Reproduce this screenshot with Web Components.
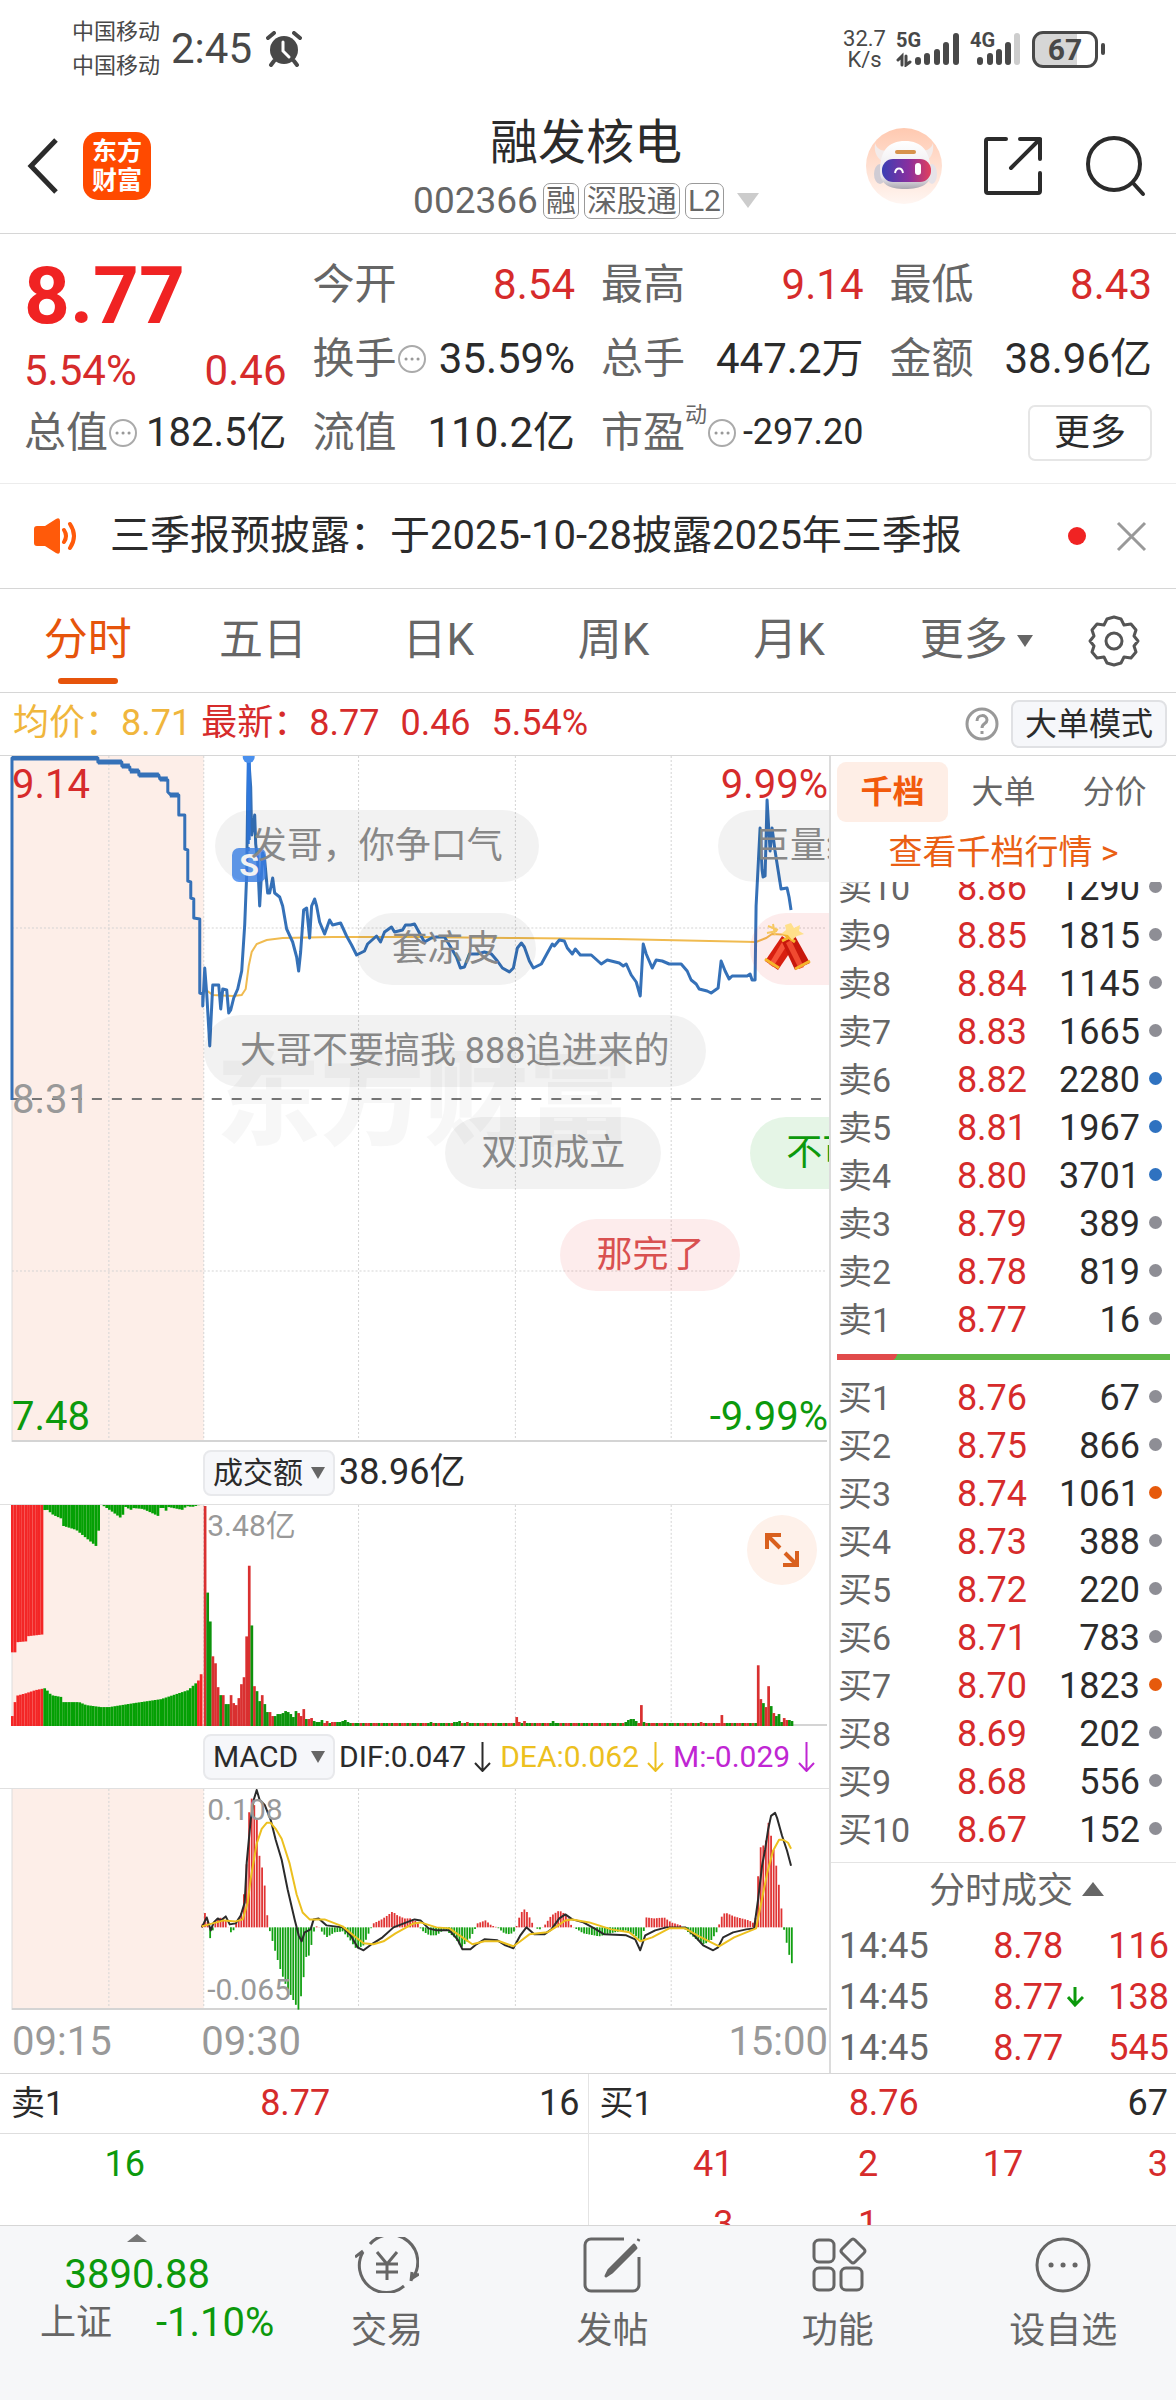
<!DOCTYPE html>
<html lang="zh-CN">
<head>
<meta charset="utf-8">
<meta name="viewport" content="width=device-width, initial-scale=1">
<title>融发核电 002366</title>
<style>
    :root {
        --up: #d62b2b;
        --down: #0c990c;
        --brand: #e6540b;
        --text: #2b2b2b;
        --muted: #666;
        --faint: #999;
        --line: #d6d6d6;
        --panel: #f6f7fa;
    }
    body {
        margin: 0;
        background: #fff;
        color: var(--text);
        font-family: Roboto, "Noto Sans CJK SC", sans-serif;
        font-size: 36px;
        line-height: 1.2;
    }
</style>
</head>
<body>
<stock-page></stock-page>

<script>
const BASE_CSS = `
    * { box-sizing: border-box; }
    :host { display: block; }
    button { font: inherit; color: inherit; background: none; border: 0; padding: 0; margin: 0; }
    a { color: inherit; text-decoration: none; }
    svg { display: block; flex: none; }
    table { border-collapse: collapse; width: 100%; table-layout: fixed; }
    td, th { padding: 0; font-weight: 400; text-align: left; }
    .up { color: var(--up); }
    .down { color: var(--down); }
`;

class BaseElement extends HTMLElement {
    constructor() {
        super();
        this.attachShadow({ mode: 'open' });
    }

    connectedCallback() {
        const template = document.createElement('template');
        template.innerHTML = `<style>${BASE_CSS}${this.css()}</style>${this.html()}`;
        this.shadowRoot.innerHTML = '';
        this.shadowRoot.appendChild(template.content);
    }

    css() { return ''; }
    html() { return '<slot></slot>'; }
}

/* ---------- status bar ---------- */
class StatusBar extends BaseElement {
    css() {
        return `
            :host {
                display: flex;
                align-items: center;
                height: 98px;
                padding: 0 71px 0 72px;
                color: #484848;
            }
            .carrier { font-size: 22px; line-height: 34px; margin-right: 11px; }
            .time { font-size: 42px; margin-right: 14px; }
            .right { display: flex; align-items: center; margin-left: auto; }
            .speed { font-size: 22px; line-height: 21px; text-align: center; margin-right: 10px; }
            .signal { position: relative; width: 64px; height: 36px; margin-right: 10px; }
            .signal.weak { width: 52px; }
            .signal b { position: absolute; left: 0; top: 0; font-size: 20px; line-height: 18px; }
            .battery {
                width: 66px; height: 37px;
                border: 3px solid #484848; border-radius: 11px;
                background: linear-gradient(90deg, #d6d6d6 70%, #fff 70%);
                font-size: 30px; font-weight: 700; line-height: 31px; text-align: center;
            }
            .nub { width: 4px; height: 12px; margin-left: 3px; border-radius: 2px; background: #484848; }
        `;
    }

    html() {
        return `
            <div class="carrier"><div>中国移动</div><div>中国移动</div></div>
            <div class="time">2:45</div>
            <svg width="36" height="36" viewBox="0 0 36 36" fill="none" stroke="#484848" stroke-linecap="round">
                <circle cx="18" cy="19" r="14" fill="#484848" stroke="none"/>
                <path d="M2 7 8 2M34 7 28 2" stroke-width="4"/>
                <path d="M8 30 5 34M28 30 31 34" stroke-width="4"/>
                <path d="M17 11v9l6 6" stroke="#fff" stroke-width="3"/>
            </svg>
            <div class="right">
                <div class="speed"><div>32.7</div><div>K/s</div></div>
                <div class="signal">
                    <b>5G</b>
                    <svg width="64" height="36" viewBox="0 0 64 36" stroke="#484848" stroke-width="6" stroke-linecap="round">
                        <path d="M22 29v2M31 25v6M41 21v10M50 14v17M60 5v26"/>
                        <path d="M2 29l4-4v9M14 31l-4 3v-9" fill="none" stroke-width="3"/>
                    </svg>
                </div>
                <div class="signal weak">
                    <b>4G</b>
                    <svg width="52" height="36" viewBox="0 0 52 36" stroke="#484848" stroke-width="6" stroke-linecap="round">
                        <path d="M10 29v2M20 25v6M29 21v10M38 14v17"/>
                        <path d="M47 5v26" stroke="#cdcdcd"/>
                    </svg>
                </div>
                <div class="battery">67</div><div class="nub"></div>
            </div>
        `;
    }
}

/* ---------- header ---------- */
class StockHeader extends BaseElement {
    css() {
        return `
            :host {
                display: grid;
                grid-template-columns: 1fr auto 1fr;
                align-items: center;
                height: 136px;
                padding: 0 30px 0 26px;
                border-bottom: 1px solid var(--line);
            }
            .left { display: flex; align-items: center; gap: 23px; }
            .logo {
                width: 68px; height: 68px; border-radius: 15px;
                background: #ff4a00; color: #fff;
                font-size: 25px; font-weight: 700; line-height: 29px;
                padding-top: 5px; text-align: center;
            }
            .title { font-size: 48px; line-height: 60px; text-align: center; font-weight: 400; margin: 0 0 10px; }
            .code { display: flex; align-items: center; gap: 5px; color: var(--muted); font-size: 37px; line-height: 36px; }
            .tag { font-size: 30px; line-height: 34px; border: 1px solid #999; border-radius: 7px; padding: 0 2px; }
            .right { display: flex; align-items: center; justify-content: flex-end; gap: 41px; }
            .code svg { margin-left: 8px; }
        `;
    }

    html() {
        return `
            <div class="left">
                <button aria-label="返回">
                    <svg width="34" height="60" viewBox="0 0 34 60" fill="none" stroke="#2b2b2b" stroke-width="5">
                        <path d="M30 4 5 30 30 56"/>
                    </svg>
                </button>
                <div class="logo">东方<br>财富</div>
            </div>
            <div>
                <h1 class="title">融发核电</h1>
                <div class="code">
                    <span>002366</span><span class="tag">融</span><span class="tag">深股通</span><span class="tag">L2</span>
                    <svg width="22" height="15" viewBox="0 0 22 15"><path d="M0 0h22L11 15z" fill="#ccc"/></svg>
                </div>
            </div>
            <div class="right">
                <button aria-label="助手">
                    <svg width="76" height="76" viewBox="0 0 76 76">
                        <defs>
                            <linearGradient id="halo" x2="0" y2="1"><stop stop-color="#ffc9b0"/><stop offset="1" stop-color="#fff6f2"/></linearGradient>
                            <linearGradient id="visor" x2="1"><stop stop-color="#3a3fb4"/><stop offset=".55" stop-color="#8a2f9e"/><stop offset="1" stop-color="#e2405c"/></linearGradient>
                            <linearGradient id="helmet" x2="0" y2="1"><stop stop-color="#fff"/><stop offset=".75" stop-color="#eae8ec"/><stop offset="1" stop-color="#a9a6b0"/></linearGradient>
                        </defs>
                        <circle cx="38" cy="38" r="38" fill="url(#halo)"/>
                        <path d="M9 15c-1 8 1 14 7 18l9-11c-8 2-14 0-16-7zM67 15c1 8-1 14-7 18l-9-11c8 2 14 0 16-7z" fill="#f3ebea"/>
                        <ellipse cx="14" cy="46" rx="6" ry="10" fill="#d0ccd4"/>
                        <ellipse cx="66" cy="46" rx="5" ry="10" fill="#e6e2e8"/>
                        <path d="M14 43c0-20 8-30 25-30s25 10 26 30c1 13-10 18-26 18S14 56 14 43z" fill="url(#helmet)"/>
                        <rect x="29" y="22" width="21" height="4" rx="2" fill="#d7934c"/>
                        <rect x="16" y="31" width="49" height="23" rx="11" fill="url(#visor)"/>
                        <path d="M29 45c1-6 7-6 8 0" fill="none" stroke="#fff" stroke-width="2"/>
                        <rect x="49" y="35" width="6" height="12" rx="3" fill="#fff"/>
                    </svg>
                </button>
                <button aria-label="分享">
                    <svg width="60" height="60" viewBox="0 0 60 60" fill="none" stroke="#2b2b2b" stroke-width="4" stroke-linecap="round" stroke-linejoin="round">
                        <path d="M23 3H5a2 2 0 0 0-2 2v50a2 2 0 0 0 2 2h50a2 2 0 0 0 2-2V37"/>
                        <path d="M37 3h20v20M57 3 28 32"/>
                    </svg>
                </button>
                <button aria-label="搜索">
                    <svg width="62" height="62" viewBox="0 0 62 62" fill="none" stroke="#2b2b2b" stroke-width="4" stroke-linecap="round">
                        <circle cx="30" cy="29" r="26"/><path d="M49 48 59 59"/>
                    </svg>
                </button>
            </div>
        `;
    }
}

/* ---------- quote board ---------- */
const INFO_ICON = `
    <svg width="30" height="30" viewBox="0 0 30 30" fill="none" stroke="#aaa" stroke-width="2">
        <circle cx="15" cy="15" r="13"/>
        <path d="M9 15h.1M15 15h.1M21 15h.1" stroke="#999" stroke-width="3" stroke-linecap="round"/>
    </svg>`;

class QuoteItem extends BaseElement {
    css() {
        return `
            :host { display: flex; align-items: center; font-size: 42px; white-space: nowrap; }
            .label { color: var(--muted); }
            sup { font-size: 22px; line-height: 22px; align-self: flex-start; margin-top: 8px; color: var(--muted); }
            .value { margin-left: auto; }
            :host([tone="up"]) .value { color: var(--up); }
            :host([size="small"]) .value { font-size: 40px; }
            :host([size="tiny"]) .value { font-size: 36px; }
        `;
    }

    html() {
        const mark = this.getAttribute('mark');
        return `
            <span class="label">${this.getAttribute('label')}</span>
            ${mark ? `<sup>${mark}</sup>` : ''}
            ${this.hasAttribute('info') ? INFO_ICON : ''}
            <span class="value"><slot></slot></span>
        `;
    }
}

class QuoteBoard extends BaseElement {
    css() {
        return `
            :host {
                display: grid;
                grid-template-columns: repeat(4, 1fr);
                grid-auto-rows: 74px;
                column-gap: 26px;
                padding: 14px 24px 13px;
                border-bottom: 1px solid #ececec;
            }
            .main { grid-row: span 2; display: flex; flex-direction: column; justify-content: flex-end; gap: 8px; color: var(--up); }
            .price { font-size: 80px; font-weight: 700; line-height: 84px; color: #f02323; }
            .change { display: flex; justify-content: space-between; font-size: 42px; line-height: 50px; }
            .more {
                justify-self: end; align-self: center;
                width: 124px; height: 56px;
                border: 2px solid #e6e6e6; border-radius: 7px;
                background: #fff; font-size: 36px; line-height: 50px;
            }
        `;
    }

    html() {
        return `
            <div class="main">
                <div class="price">8.77</div>
                <div class="change"><span>5.54%</span><span>0.46</span></div>
            </div>
            <quote-item label="今开" tone="up">8.54</quote-item>
            <quote-item label="最高" tone="up">9.14</quote-item>
            <quote-item label="最低" tone="up">8.43</quote-item>
            <quote-item label="换手" info>35.59%</quote-item>
            <quote-item label="总手">447.2万</quote-item>
            <quote-item label="金额">38.96亿</quote-item>
            <quote-item label="总值" info size="small">182.5亿</quote-item>
            <quote-item label="流值">110.2亿</quote-item>
            <quote-item label="市盈" mark="动" info size="tiny">-297.20</quote-item>
            <button class="more">更多</button>
        `;
    }
}

/* ---------- notice ---------- */
class NoticeBar extends BaseElement {
    css() {
        return `
            :host {
                display: flex;
                align-items: center;
                height: 105px;
                padding: 0 29px 0 34px;
                border-bottom: 1px solid var(--line);
            }
            a { flex: 1; margin-left: 32px; font-size: 40px; white-space: nowrap; }
            .dot { width: 18px; height: 18px; border-radius: 50%; background: #f02323; margin-right: 30px; }
        `;
    }

    html() {
        return `
            <svg width="44" height="36" viewBox="0 0 44 36">
                <path d="M0 11q0-3 3-3h8L22 1q4-2 4 2v30q0 4-4 2l-11-7H3q-3 0-3-3z" fill="#ff5a0a"/>
                <path d="M30 12q4 6 0 12M36 6q8 12 0 24" fill="none" stroke="#ff5a0a" stroke-width="4" stroke-linecap="round"/>
            </svg>
            <a href="#notice"><slot></slot></a>
            <span class="dot"></span>
            <button aria-label="关闭">
                <svg width="31" height="31" viewBox="0 0 31 31" stroke="#999" stroke-width="3"><path d="M2 2 29 29M29 2 2 29"/></svg>
            </button>
        `;
    }
}

/* ---------- period tabs ---------- */
class PeriodTabs extends BaseElement {
    css() {
        return `
            :host { display: grid; grid-template-columns: repeat(6, 1fr) 124px; height: 104px; border-bottom: 1px solid var(--line); }
            button { font-size: 44px; color: var(--muted); display: flex; align-items: center; justify-content: center; gap: 9px; }
            .on { position: relative; color: var(--brand); }
            .on::after {
                content: ""; position: absolute; left: 50%; bottom: 8px;
                width: 60px; height: 6px; margin-left: -30px; border-radius: 3px; background: var(--brand);
            }
            .more { padding-left: 24px; }
        `;
    }

    html() {
        const tabs = ['分时', '五日', '日K', '周K', '月K'];
        const teeth = 'M27 3l7 2 3 6 7-1 5 6-2 6 4 5-4 5 2 6-5 6-7-1-3 6-7 2-7-2-3-6-7 1-5-6 2-6-4-5 4-5-2-6 5-6 7 1 3-6z';
        return `
            ${tabs.map((t, i) => `<button class="${i ? '' : 'on'}">${t}</button>`).join('')}
            <button class="more">更多<svg width="16" height="12" viewBox="0 0 16 12"><path d="M0 0h16L8 12z" fill="#666"/></svg></button>
            <button aria-label="设置">
                <svg width="54" height="54" viewBox="0 0 54 54" fill="none" stroke="#555" stroke-width="3" stroke-linejoin="round">
                    <path d="${teeth}"/><circle cx="27" cy="27" r="8"/>
                </svg>
            </button>
        `;
    }
}

/* ---------- line above the chart ---------- */
class ChartLegend extends BaseElement {
    css() {
        return `
            :host {
                display: flex;
                align-items: center;
                height: 63px;
                padding: 0 9px 0 13px;
                border-bottom: 1px solid var(--line);
            }
            .avg { color: #f0b63c; margin-right: 10px; }
            .up { display: flex; gap: 21px; }
            .help { margin-left: auto; margin-right: 12px; }
            .mode {
                height: 48px; padding: 0 12px;
                border: 2px solid #e0e1e4; border-radius: 8px;
                background: var(--panel); font-size: 32px; line-height: 42px;
            }
        `;
    }

    html() {
        return `
            <span class="avg">均价：8.71</span>
            <span class="up"><span>最新：8.77</span><span>0.46</span><span>5.54%</span></span>
            <button class="help" aria-label="帮助">
                <svg width="34" height="34" viewBox="0 0 34 34" fill="none" stroke="#999" stroke-width="3">
                    <circle cx="17" cy="17" r="15"/>
                    <path d="M12 14c0-7 10-7 10-1 0 4-5 3-5 8M17 24v3"/>
                </svg>
            </button>
            <button class="mode">大单模式</button>
        `;
    }
}

/* ---------- charts ---------- */
const CHART_W = 830;
const LEFT = 12;
const OPEN_X = 204;
const RIGHT = 828;
const STEP = 2.6;
const GRID_X = [109, 204, 359, 516, 672];

const CHART_CSS = `
    :host { position: relative; overflow: hidden; }
    .plot { width: 100%; }
    .label { position: absolute; line-height: 40px; white-space: nowrap; }
    .grid { stroke: #d4d4d4; stroke-width: 1; stroke-dasharray: 2 2; }
`;

function frame(h) {
    return `
        <rect x="${LEFT}" y="0" width="${OPEN_X - LEFT}" height="${h}" fill="#fdeee8"/>
        ${GRID_X.map(x => `<line class="grid" x1="${x}" x2="${x}" y1="0" y2="${h}"/>`).join('')}
        <path d="M${LEFT} 0V${h}" stroke="#ddd"/>
        <path d="M${LEFT} ${h - 1}H${RIGHT}" stroke="#d4d4d4" stroke-width="2"/>
    `;
}

// chart x as a share of the chart's width
function left(x) {
    return `left:${(x / CHART_W * 100).toFixed(1)}%`;
}

// linear value of a list of [x, value] at x
function sample(points, x) {
    for (let i = 1; i < points.length; i++) {
        const [x0, v0] = points[i - 1];
        const [x1, v1] = points[i];
        if (x <= x1) {
            return x1 === x0 ? v1 : v0 + (v1 - v0) * (x - x0) / (x1 - x0);
        }
    }
    return points[points.length - 1][1];
}

class PriceChart extends BaseElement {
    css() {
        return `
            ${CHART_CSS}
            .plot { height: 686px; }
            .label { font-size: 40px; }
            .tl { left: 12px; top: 9px; }
            .ml { left: 12px; top: 324px; color: var(--faint); }
            .bl { left: 12px; bottom: 5px; }
            .tr { right: 1px; top: 9px; }
            .br { right: 1px; bottom: 5px; }
            .watermark {
                position: absolute; top: 286px;
                font-size: 104px; font-weight: 900; line-height: 120px; white-space: nowrap;
                color: rgba(0, 0, 0, .03);
            }
            .badge {
                position: absolute; top: 92px;
                width: 34px; height: 34px; border-radius: 7px;
                background: rgba(60, 133, 240, .8); color: #fff;
                font-size: 32px; font-weight: 700; line-height: 35px; text-align: center;
            }
            .pill {
                position: absolute; height: 72px; padding: 0 36px; border-radius: 36px;
                background: rgba(0, 0, 0, .05); color: #888;
                line-height: 72px; white-space: nowrap;
            }
            .pill.red { background: rgba(235, 40, 40, .09); color: #d95050; }
            .pill.green { background: rgba(20, 160, 30, .11); color: var(--down); }
            .pill.cracker { padding: 10px 60px 0 14px; }
        `;
    }

    html() {
        const price = `12,344 12,2 98,2 98,6 122,6 122,10 130,11 130,14 139,15 139,19 159,19 160,23 168,24 168,36
            171,39 179,39 179,59 185,59 185,93 188,94 188,125 191,126 191,142 194,143 194,162 200,163 200,237
            203,238 203,250 205,212 207,238 210,290 213,229 219,229 221,253 223,233 227,234 229,257 231,254
            234,242 238,233 242,215 245,169 247,118 248,40 249,2 251,31 252,79 255,59 256,88 258,105 260,150
            263,97 265,104 268,137 270,137 273,122 275,137 280,141 283,150 287,173 293,186 297,201 299,215
            301,196 304,154 307,152 310,182 312,150 315,143 317,150 320,166 325,178 330,164 333,169 341,167
            347,180 352,189 357,199 365,195 368,188 377,180 381,186 385,176 392,171 395,176 403,174 406,169
            411,169 415,168 420,177 425,186 432,182 437,181 445,181 450,189 457,201 461,212 465,211 470,198
            478,198 485,196 492,198 498,205 503,212 510,216 514,212 518,192 522,187 525,191 530,205 534,212
            542,208 548,197 553,188 555,190 560,184 565,185 568,192 573,198 576,193 581,199 592,199 602,208
            608,204 620,207 624,210 627,208 632,219 637,226 641,240 644,188 647,198 653,212 657,204 663,205
            670,208 682,208 688,215 692,224 697,228 700,233 708,235 712,237 719,232 722,205 726,215 730,223
            733,220 748,220 751,218 753,224 756,224 757,150 761,72 763,114 764,121 766,120 768,44 771,95
            773,72 776,95 779,114 782,133 788,132 790,141 792,154`;
        const average = `205,233 213,239 233,240 242,239 246,233 249,210 252,196 257,188 267,184 283,182 333,181
            417,181 517,182 617,183 757,186 767,182 773,178 792,179`;
        const pills = [
            [215, 54, '', '发哥，你争口气'],
            [356, 157, '', '套凉皮'],
            [204, 259, '', '大哥不要搞我 888追进来的'],
            [446, 361, '', '双顶成立'],
            [561, 463, 'red', '那完了'],
            [719, 54, '', '巨量缩'],
            [751, 361, 'green', '不可'],
        ];
        return `
            <div class="watermark" style="${left(217)}" aria-hidden="true">东方财富</div>
            <svg class="plot" viewBox="0 0 ${CHART_W} 686" preserveAspectRatio="none" fill="none">
                ${frame(686)}
                <path class="grid" d="M12 172H828M12 515H828"/>
                <path d="M12 343H828" stroke="#777" stroke-width="2" stroke-dasharray="10 10"/>
                <polyline points="${average}" stroke="#f0bb50" stroke-width="2"/>
                <polyline points="${price}" stroke="#3571b8" stroke-width="3" stroke-linejoin="round"/>
                <path d="M12 2H98M98 6h24M122 10h8M130 15h9M139 19h20M160 23h8M170 39h9" stroke="#3571b8" stroke-width="5"/>
                <path d="M249 0V84" stroke="#2f78dd" stroke-width="4"/>
                <path d="M249 84V96" stroke="#2f78dd" stroke-width="2" stroke-dasharray="4 3"/>
                <circle cx="249" cy="1" r="6" fill="#4a90ee"/>
            </svg>
            <span class="label tl up">9.14</span>
            <span class="label ml">8.31</span>
            <span class="label bl down">7.48</span>
            <span class="label tr up">9.99%</span>
            <span class="label br down">-9.99%</span>
            <span class="badge" style="${left(232)}">S</span>
            ${pills.map(([x, y, tone, text]) => `<span class="pill ${tone}" style="${left(x)};top:${y}px">${text}</span>`).join('')}
            <span class="pill red cracker" style="${left(751)};top:157px">
                <svg width="48" height="50" viewBox="0 0 48 50">
                    <path d="M18 13l13 9-17 25L1 38z" fill="#d81f10"/>
                    <path d="M20 16l5 3-16 25-4-3z" fill="#f6543a"/>
                    <path d="M31 13L18 19l13 28 15-7z" fill="#c8180c"/>
                    <path d="M27 17l-5 3 13 26 5-2z" fill="#f04a30"/>
                    <path d="M1 36l14 9M20 11l11 8M31 46l15-8M18 18l13-7" stroke="#f5b52c" stroke-width="3"/>
                    <path d="M27 0l3 5 6-3-1 6 5 3-7 2-5 4-4-5-7-1 5-4-1-5z" fill="#ffe08a"/>
                    <path d="M4 3l10 4M3 10l10-2M9 1l2 11" stroke="#f7c861" stroke-width="2"/>
                </svg>
            </span>
        `;
    }
}

const PANEL_CSS = `
    .head { display: flex; align-items: center; height: 62px; padding-left: 24.5%; white-space: nowrap; }
    .head button {
        display: flex; align-items: center; justify-content: space-between;
        width: 132px; height: 46px; padding: 0 8px; margin-right: 4px;
        border: 2px solid #e8e9ec; border-radius: 8px; background: var(--panel); font-size: 30px;
    }
    .plot { height: 222px; border-top: 1px solid #e0e0e0; }
    .area { position: relative; }
    .label { left: 25%; font-size: 30px; color: var(--faint); }
`;
const DOWN_TRIANGLE = '<svg width="14" height="12" viewBox="0 0 14 12"><path d="M0 0h14L7 12z" fill="#666"/></svg>';

class VolumeChart extends BaseElement {
    css() {
        return `
            ${CHART_CSS}
            ${PANEL_CSS}
            .expand {
                position: absolute; right: 12px; top: 11px;
                width: 70px; height: 70px; border-radius: 50%;
                display: flex; align-items: center; justify-content: center;
                background: #fef1ea;
            }
        `;
    }

    bar(x, y, h, color) {
        return `<rect x="${x}" y="${y}" width="2.7" height="${h}" fill="${color}"/>`;
    }

    auctionBars() {
        const red = '#f32626';
        const green = '#04a004';
        const top = [[11, 148], [14, 148], [14, 138], [25, 137], [25, 132], [42, 130], [42, 6], [45, 4], [52, 10],
            [61, 14], [62, 21], [75, 25], [97, 43], [98, 0], [101, 0], [110, 6], [121, 14], [123, 2], [126, 2],
            [129, 6], [131, 3], [142, 4], [157, 11], [158, 3], [164, 3], [165, 6], [167, 2], [182, 5], [185, 1],
            [191, 2], [198, 0], [204, 0]];
        const bottom = [[11, 10], [13, 10], [14, 30], [25, 33], [34, 36], [44, 38], [50, 31], [61, 29], [62, 24],
            [78, 24], [85, 21], [100, 19], [108, 19], [133, 23], [160, 27], [187, 36], [197, 45], [200, 52], [204, 58]];
        let out = '';
        for (let x = 11; x < 202; x += 2.7) {
            const hanging = sample(top, x);
            if (hanging > 0) out += this.bar(x, 0, hanging, x < 43 ? red : green);
            const h = sample(bottom, x);
            out += this.bar(x, 222 - h, h, x < 43 || x > 197 ? red : green);
        }
        return out;
    }

    tradeBars() {
        const opening = 'r221 g134 g105 r70 r63 r39 g31 r31 g22 g22 r31 r23 r21 r28 r42 r49 r90 r161 g101 r40 g35 g25 r31 g22 g14 r14 r10 g10 g12 g12 g13 g15 g14 g12 g9 g15 r13 r10 r17 g7 r7 r8 g5 g4 g4 g6 r3 r5 g3 r4 r4 g4 g4 g5 g6 g4'.split(' ');
        const closing = 'r61 r27 g23 r19 r40 g20 r13 g10 g12 g4 r8 r6 g6 g5'.split(' ');
        const spikes = {
            87: 'g4', 96: 'g4', 97: 'g4', 98: 'g5', 101: 'r4', 120: 'r9', 121: 'r4', 123: 'r5', 134: 'g5',
            162: 'g4', 163: 'g6', 164: 'g7', 165: 'g7', 166: 'g5', 168: 'r21', 169: 'g4', 191: 'r4', 199: 'r11',
        };
        let out = '';
        for (let i = 0; i < 227; i++) {
            const idle = (i * 7) % 11 < 6 ? 'r3' : 'g3';
            const item = opening[i] || closing[i - 213] || spikes[i] || idle;
            const h = Number(item.slice(1));
            out += this.bar(OPEN_X + i * STEP, 222 - h, h, item[0] === 'r' ? '#d93030' : '#0c930c');
        }
        return out;
    }

    html() {
        return `
            <div class="head"><button>成交额${DOWN_TRIANGLE}</button>38.96亿</div>
            <div class="area">
                <svg class="plot" viewBox="0 0 ${CHART_W} 222" preserveAspectRatio="none">
                    ${frame(222)}${this.auctionBars()}${this.tradeBars()}
                </svg>
                <span class="label" style="top:2px">3.48亿</span>
                <button class="expand" aria-label="放大">
                    <svg width="34" height="34" viewBox="0 0 34 34" fill="none" stroke="#d9601e" stroke-width="4">
                        <path d="M2 16V2h14M2 2l13 13M32 18v14H18M32 32 20 20"/>
                    </svg>
                </button>
            </div>
        `;
    }
}

class MacdChart extends BaseElement {
    css() {
        return `
            ${CHART_CSS}
            ${PANEL_CSS}
            .value { display: flex; align-items: center; gap: 8px; font-size: 30px; margin-right: 9px; }
            .dea { color: #ecc01f; }
            .m { color: #c026d3; }
        `;
    }

    histogram() {
        const points = [[202, 0], [205, 15], [208, 5], [210, -12], [213, -3], [216, 8], [222, 10], [227, 6], [230, -5],
            [233, -5], [236, 3], [242, 15], [245, 40], [247, 66], [250, 128], [253, 130], [257, 112], [260, 69],
            [263, 58], [265, 42], [267, 16], [270, -3], [275, -22], [280, -40], [285, -55], [292, -70], [299, -83],
            [303, -60], [306, -30], [310, -28], [314, -5], [318, 3], [322, -4], [327, -10], [335, -5], [343, -4],
            [350, -12], [357, -22], [364, -18], [370, -4], [374, 4], [382, 8], [388, 12], [393, 16], [398, 12],
            [405, 9], [412, 9], [418, 5], [422, -3], [430, -8], [437, -8], [445, -2], [455, -10], [462, -20],
            [470, -12], [475, -3], [478, 4], [486, 7], [492, 2], [498, 0], [505, -6], [511, -7], [516, -3], [519, 8],
            [524, 19], [528, 15], [532, 6], [536, -1], [541, -2], [546, 3], [552, 12], [560, 17], [568, 12], [572, 2],
            [576, -1], [584, -6], [600, -9], [615, -5], [627, -3], [636, -8], [642, -14], [645, -2], [647, 10],
            [655, 9], [665, 10], [672, 5], [682, 2], [688, -4], [697, -12], [705, -17], [712, -13], [718, -4],
            [722, 10], [726, 15], [735, 11], [750, 7], [755, 4], [757, 12], [758, 40], [762, 85], [766, 80],
            [769, 107], [772, 92], [776, 70], [779, 50], [782, 23], [784, 3], [786, -8], [789, -22], [792, -36]];
        let out = '';
        for (let x = 202.6; x <= 793; x += STEP) {
            const v = sample(points, x);
            out += `<path d="M${x} 139V${139 - v}" stroke="${v > 0 ? '#e03434' : '#12a012'}" stroke-width="1.8"/>`;
        }
        return out;
    }

    html() {
        const dif = `202,139 207,129 211,142 214,134 218,130 221,132 226,128 230,136 236,135 241,127 245,114 247,74
            251,31 254,11 257,1 260,11 265,16 271,31 276,51 282,71 288,101 295,131 299,147 302,153 305,144 311,141
            314,131 319,130 327,137 343,139 351,147 358,159 364,162 372,156 383,149 394,139 407,134 415,131 421,132
            429,140 437,142 450,142 458,151 463,161 471,161 477,156 485,151 498,152 506,157 514,160 521,147 527,139
            535,146 545,146 552,141 560,130 566,126 573,131 584,134 595,140 605,146 627,147 636,151 641,162 646,147
            656,142 667,139 686,139 694,146 704,157 714,162 719,159 724,149 734,144 747,141 755,140 759,111 763,77
            766,61 769,41 772,27 776,24 778,29 783,47 788,62 792,77`;
        const dea = `202,138 224,132 236,133 243,131 248,114 251,90 257,55 262,40 267,34 271,34 276,40 282,50 290,75
            297,106 303,124 310,131 325,131 343,138 355,148 364,155 374,156 384,153 396,145 414,135 421,134 437,139
            450,140 460,147 473,156 485,153 500,153 514,158 521,153 530,146 548,144 556,139 566,132 573,131 590,134
            612,141 630,144 641,153 653,149 670,140 686,140 700,148 720,158 735,149 757,140 762,115 768,85 774,62
            780,51 784,51 789,54 792,60`;
        const arrow = '<svg width="17" height="30" viewBox="0 0 17 30" fill="none" stroke="currentColor" stroke-width="2"><path d="M8.5 0v29M1 21l7.5 8 7.5-8"/></svg>';
        return `
            <div class="head">
                <button>MACD${DOWN_TRIANGLE}</button>
                <span class="value">DIF:0.047${arrow}</span>
                <span class="value dea">DEA:0.062${arrow}</span>
                <span class="value m">M:-0.029${arrow}</span>
            </div>
            <div class="area">
                <svg class="plot" viewBox="0 0 ${CHART_W} 222" preserveAspectRatio="none" fill="none">
                    ${frame(222)}${this.histogram()}
                    <polyline points="${dif}" stroke="#2b2b2b" stroke-width="2" stroke-linejoin="round"/>
                    <polyline points="${dea}" stroke="#ecc01f" stroke-width="2" stroke-linejoin="round"/>
                </svg>
                <span class="label" style="top:2px">0.108</span>
                <span class="label" style="bottom:0">-0.065</span>
            </div>
        `;
    }
}

class TimeAxis extends BaseElement {
    css() {
        return `
            :host { display: flex; height: 63px; padding: 0 1px 0 12px; color: var(--faint); font-size: 40px; line-height: 63px; }
            .call { width: 23.2%; }
            .close { margin-left: auto; }
        `;
    }

    html() {
        return '<span class="call">09:15</span><span>09:30</span><span class="close">15:00</span>';
    }
}

/* ---------- order book ---------- */
class OrderBook extends BaseElement {
    css() {
        return `
            :host { padding: 6px 6px 8px; }
            .tabs { display: grid; grid-template-columns: repeat(3, 1fr); }
            .tabs button { height: 60px; border-radius: 9px; font-size: 32px; color: var(--muted); }
            .tabs .on { background: #feeee6; color: #f25a0c; font-weight: 700; }
            .link { display: block; text-align: center; font-size: 34px; line-height: 60px; color: #ea5f14; }
            .clip { overflow: hidden; }
            .clip table { margin-top: -18px; }
            tr { height: 48px; line-height: 46px; }
            th { width: 36%; font-size: 34px; color: var(--muted); padding-left: 1px; }
            .vol { width: 34%; text-align: right; }
            .mark { width: 9%; }
            .mark i { display: block; width: 13px; height: 13px; margin: 0 auto 4px; border-radius: 50%; background: #8e8e95; }
            .mark .blue { background: #2f72c0; }
            .mark .orange { background: #e65a0c; }
            .ratio {
                height: 6px; margin: 10px 0 14px;
                background: linear-gradient(120deg, #e14b4b 18%, #5fb848 18%);
            }
        `;
    }

    rows(name, list) {
        return list.map(([n, price, vol, mark = '']) => `
            <tr>
                <th scope="row">${name}${n}</th>
                <td class="up">${price}</td>
                <td class="vol">${vol}</td>
                <td class="mark"><i class="${mark}"></i></td>
            </tr>`).join('');
    }

    html() {
        const sell = [
            [10, '8.86', 1290], [9, '8.85', 1815], [8, '8.84', 1145], [7, '8.83', 1665], [6, '8.82', 2280, 'blue'],
            [5, '8.81', 1967, 'blue'], [4, '8.80', 3701, 'blue'], [3, '8.79', 389], [2, '8.78', 819], [1, '8.77', 16],
        ];
        const buy = [
            [1, '8.76', 67], [2, '8.75', 866], [3, '8.74', 1061, 'orange'], [4, '8.73', 388], [5, '8.72', 220],
            [6, '8.71', 783], [7, '8.70', 1823, 'orange'], [8, '8.69', 202], [9, '8.68', 556], [10, '8.67', 152],
        ];
        return `
            <div class="tabs"><button class="on">千档</button><button>大单</button><button>分价</button></div>
            <a class="link" href="#levels">查看千档行情 &gt;</a>
            <div class="clip"><table>${this.rows('卖', sell)}</table></div>
            <div class="ratio"></div>
            <table>${this.rows('买', buy)}</table>
        `;
    }
}

class TradeList extends BaseElement {
    css() {
        return `
            :host { border-top: 1px solid #e4e4e4; }
            .head { display: flex; align-items: center; justify-content: center; gap: 9px; width: 100%; height: 57px; padding-left: 26px; color: var(--muted); }
            .head svg { margin-top: -6px; }
            tr { height: 51px; line-height: 46px; }
            .time { width: 47%; padding-left: 8px; color: var(--muted); }
            .price { width: 27%; }
            .price span { display: flex; align-items: center; gap: 4px; }
            .vol { text-align: right; padding-right: 7px; }
        `;
    }

    html() {
        const arrow = '<svg width="17" height="20" viewBox="0 0 17 20" fill="none" stroke="#0c990c" stroke-width="3"><path d="M8 0v17M1 10l7 8 8-8"/></svg>';
        const trades = [['14:45', '8.78', 116], ['14:45', `8.77${arrow}`, 138], ['14:45', '8.77', 545]];
        return `
            <button class="head">分时成交<svg width="22" height="14" viewBox="0 0 22 14"><path d="M11 0l11 14H0z" fill="#666"/></svg></button>
            <table>
                ${trades.map(([t, p, v]) => `<tr><td class="time">${t}</td><td class="price up"><span>${p}</span></td><td class="vol up">${v}</td></tr>`).join('')}
            </table>
        `;
    }
}

/* ---------- level one queue ---------- */
class QuoteQueue extends BaseElement {
    css() {
        return `
            :host { flex: 1; min-width: 0; }
            .head { display: grid; grid-template-columns: repeat(3, 1fr); height: 60px; line-height: 59px; padding: 0 8px 0 11px; border-bottom: 1px solid #dedede; }
            .name { font-size: 34px; }
            .price { text-align: center; color: var(--up); }
            .total { text-align: right; }
            .list { display: grid; grid-template-columns: repeat(4, 1fr); grid-auto-rows: 60px; height: 91px; overflow: hidden; padding-right: 8px; line-height: 60px; text-align: right; }
        `;
    }

    html() {
        const tone = this.getAttribute('tone');
        const list = this.getAttribute('list').split(' ');
        return `
            <div class="head">
                <span class="name">${this.getAttribute('name')}</span>
                <span class="price">${this.getAttribute('price')}</span>
                <span class="total">${this.getAttribute('total')}</span>
            </div>
            <div class="list ${tone}">${list.map(n => `<span>${n}</span>`).join('')}</div>
        `;
    }
}

/* ---------- bottom navigation ---------- */
class BottomNav extends BaseElement {
    css() {
        return `
            :host {
                display: grid;
                grid-template-columns: 17fr repeat(4, 14fr);
                align-items: start;
                flex: 1;
                border-top: 1px solid var(--line);
                background: #f6f7f9;
            }
            .index { text-align: center; padding-top: 8px; font-size: 40px; line-height: 48px; white-space: nowrap; }
            .index svg { margin: 0 auto; }
            .value { padding-top: 9px; }
            .row { display: flex; gap: 44px; padding-left: 40px; }
            .name { font-size: 36px; color: var(--muted); }
            .item { display: flex; flex-direction: column; align-items: center; gap: 14px; padding-top: 11px; line-height: 48px; color: var(--muted); }
        `;
    }

    icon(body) {
        return `<svg width="64" height="56" viewBox="0 0 64 56" fill="none" stroke="#666" stroke-width="3" stroke-linejoin="round">${body}</svg>`;
    }

    html() {
        const items = [
            ['交易', '<path d="M15 7a27 27 0 0 1 41 36M49 49A27 27 0 0 1 8 15M0 20l8-6M56 42l8-5M56 44l1-9"/><path d="M22 15l10 12 10-12M32 27v16M21 27h22M21 35h22"/>'],
            ['发帖', '<path d="M44 2H11a6 6 0 0 0-6 6v40a6 6 0 0 0 6 6h42a6 6 0 0 0 6-6V20"/><path d="M54 8 29 33l-3 6 6-4L56 11zM58 4l1-2" fill="#666"/>'],
            ['功能', '<rect x="8" y="3" width="20" height="22" rx="5"/><rect x="8" y="31" width="20" height="22" rx="5"/><rect x="35" y="31" width="21" height="22" rx="5"/><path d="M45 3q2-2 4 0l9 9q2 2 0 4l-9 9q-2 2-4 0l-9-9q-2-2 0-4z"/>'],
            ['设自选', '<circle cx="32" cy="28" r="26"/><path d="M20 28h.1M32 28h.1M44 28h.1" stroke-width="5" stroke-linecap="round"/>'],
        ];
        return `
            <div class="index">
                <svg width="20" height="8" viewBox="0 0 20 8"><path d="M10 0l10 8H0z" fill="#777"/></svg>
                <div class="value down">3890.88</div>
                <div class="row"><span class="name">上证</span><span class="down">-1.10%</span></div>
            </div>
            ${items.map(([name, body]) => `<button class="item">${this.icon(body)}<span>${name}</span></button>`).join('')}
        `;
    }
}

/* ---------- page ---------- */
class StockPage extends BaseElement {
    css() {
        return `
            :host { display: flex; flex-direction: column; min-height: 100vh; }
            main { display: grid; grid-template-columns: 831fr 345fr; border-bottom: 1px solid var(--line); }
            .charts { min-width: 0; border-right: 2px solid #dcdcdc; }
            aside { min-width: 0; }
            .queues { display: flex; }
            .queues quote-queue + quote-queue { border-left: 1px solid #e4e4e4; }
        `;
    }

    html() {
        return `
            <status-bar></status-bar>
            <stock-header></stock-header>
            <quote-board></quote-board>
            <notice-bar>三季报预披露：于2025-10-28披露2025年三季报</notice-bar>
            <period-tabs></period-tabs>
            <chart-legend></chart-legend>
            <main>
                <section class="charts">
                    <price-chart></price-chart>
                    <volume-chart></volume-chart>
                    <macd-chart></macd-chart>
                    <time-axis></time-axis>
                </section>
                <aside>
                    <order-book></order-book>
                    <trade-list></trade-list>
                </aside>
            </main>
            <div class="queues">
                <quote-queue name="卖1" price="8.77" total="16" tone="down" list="16"></quote-queue>
                <quote-queue name="买1" price="8.76" total="67" tone="up" list="41 2 17 3 3 1"></quote-queue>
            </div>
            <bottom-nav></bottom-nav>
        `;
    }
}

customElements.define('status-bar', StatusBar);
customElements.define('stock-header', StockHeader);
customElements.define('quote-item', QuoteItem);
customElements.define('quote-board', QuoteBoard);
customElements.define('notice-bar', NoticeBar);
customElements.define('period-tabs', PeriodTabs);
customElements.define('chart-legend', ChartLegend);
customElements.define('price-chart', PriceChart);
customElements.define('volume-chart', VolumeChart);
customElements.define('macd-chart', MacdChart);
customElements.define('time-axis', TimeAxis);
customElements.define('order-book', OrderBook);
customElements.define('trade-list', TradeList);
customElements.define('quote-queue', QuoteQueue);
customElements.define('bottom-nav', BottomNav);
customElements.define('stock-page', StockPage);
</script>
</body>
</html>
